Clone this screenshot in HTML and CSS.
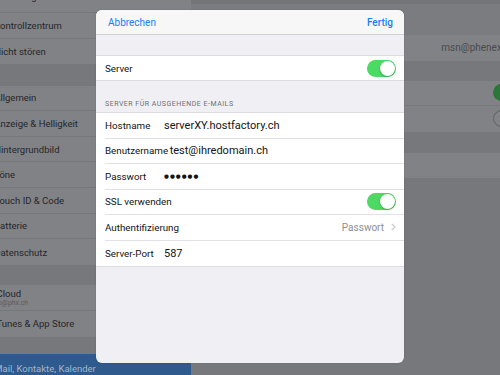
FILE: index.html
```html
<!DOCTYPE html>
<html>
<head>
<meta charset="utf-8">
<link rel="stylesheet" href="styles.css">
</head>
<body>
<div class="screen">
  <aside class="sidebar">
    <div class="cell cut">Mitteilungen</div>
    <div class="cell">Kontrollzentrum</div>
    <div class="cell last">Nicht stören</div>
    <div class="gap gap-a"></div>
    <div class="cell">Allgemein</div>
    <div class="cell">Anzeige &amp; Helligkeit</div>
    <div class="cell">Hintergrundbild</div>
    <div class="cell">Töne</div>
    <div class="cell">Touch ID &amp; Code</div>
    <div class="cell">Batterie</div>
    <div class="cell last">Datenschutz</div>
    <div class="gap gap-b"></div>
    <div class="cell two"><span>iCloud</span><span class="sub">info@phx.ch</span></div>
    <div class="cell last">iTunes &amp; App Store</div>
    <div class="gap gap-c"></div>
    <div class="cell selected">Mail, Kontakte, Kalender</div>
  </aside>
  <main class="detail">
    <div class="dtop"></div>
    <div class="drow"><span class="dval">msn@phenex.ch</span></div>
    <div class="dgap"></div>
    <div class="drow sep"><span class="dtoggle on"><span class="dknob"></span></span></div>
    <div class="drow"><span class="dtoggle off"><span class="dknob"></span></span></div>
    <div class="dgap2"></div>
    <div class="drow"></div>
  </main>
</div>

<div class="modal">
  <header class="mhead">
    <span class="mbtn">Abbrechen</span>
    <span class="mbtn strong">Fertig</span>
  </header>
  <div class="mspace"></div>
  <div class="group">
    <div class="row server">
      <span class="lbl">Server</span>
      <span class="toggle"><span class="knob"></span></span>
    </div>
  </div>
  <div class="shead">SERVER FÜR AUSGEHENDE E-MAILS</div>
  <div class="group">
    <div class="row"><span class="lbl">Hostname</span><span class="val">serverXY.hostfactory.ch</span></div>
    <div class="row"><span class="lbl">Benutzername</span><span class="val">test@ihredomain.ch</span></div>
    <div class="row"><span class="lbl">Passwort</span><span class="dots">●●●●●●</span></div>
    <div class="row"><span class="lbl">SSL verwenden</span><span class="toggle"><span class="knob"></span></span></div>
    <div class="row"><span class="lbl">Authentifizierung</span><span class="detailval">Passwort<svg class="chev" width="5" height="8" viewBox="0 0 5 8"><path d="M0.8 0.8 L4 4 L0.8 7.2" fill="none" stroke="#c4c4c9" stroke-width="1.1"/></svg></span></div>
    <div class="row"><span class="lbl">Server-Port</span><span class="val">587</span></div>
  </div>
</div>
</body>
</html>
```
FILE: styles.css
```css
* { box-sizing: border-box; }

body {
  margin: 0;
  width: 500px;
  height: 375px;
  overflow: hidden;
  position: relative;
  background: #77787b;
  font-family: Roboto, "Noto Sans", sans-serif;
}

.screen {
  display: flex;
  height: 375px;
  overflow: hidden;
}

/* ---------- dimmed sidebar ---------- */
.sidebar {
  flex: none;
  width: 197px;
  margin-left: -5.8px;
  margin-top: -12.6px;
  display: flex;
  flex-direction: column;
  background: #77787b;
}

.cell {
  height: 25.6px;
  flex: none;
  display: flex;
  align-items: center;
  background: #818286;
  border-bottom: 1px solid #76777b;
  font-size: 9.5px;
  color: #262628;
  white-space: nowrap;
}

.cell.cut { padding-bottom: 6px; }

.cell.last { border-bottom: none; }

.cell.two {
  flex-direction: column;
  align-items: flex-start;
  justify-content: center;
  line-height: 10px;
}

.sub {
  font-size: 6.8px;
  line-height: 8px;
  color: #595a5d;
  margin-left: -4px;
}

.gap { flex: none; }
.gap-a { height: 21.5px; }
.gap-b { height: 20.5px; }
.gap-c { height: 17.5px; }

.cell.selected {
  height: 40px;
  background: #2e5a8d;
  color: #a5b4c9;
  border: none;
  align-items: flex-start;
  padding-top: 9px;
}

/* ---------- dimmed detail ---------- */
.detail {
  flex: 1;
  display: flex;
  flex-direction: column;
  overflow: hidden;
  background: #77787b;
}

.dtop {
  height: 35px;
  flex: none;
  background: #7b7c80;
  border-top: 4px solid #747579;
}

.drow {
  height: 25.5px;
  flex: none;
  display: flex;
  align-items: center;
  background: #818286;
  padding-left: 302px;
}

.drow.sep { border-bottom: 1px solid #77787b; }

.dval {
  margin-left: -52px;
  font-size: 10px;
  color: #4a4b4e;
  white-space: nowrap;
}

.dgap { height: 20px; flex: none; }
.dgap2 { height: 21px; flex: none; }

.dtoggle {
  flex: none;
  width: 29px;
  height: 17px;
  border-radius: 9px;
  display: flex;
  align-items: center;
  padding: 1px;
}

.dtoggle.on { background: #297838; justify-content: flex-end; }
.dtoggle.off { background: #808185; border: 1px solid #6a6b6e; justify-content: flex-start; padding: 0; }

.dknob {
  width: 15px;
  height: 15px;
  border-radius: 50%;
  background: #828387;
  box-shadow: 0 0 1px rgba(0,0,0,0.4);
}

/* ---------- modal ---------- */
.modal {
  position: absolute;
  left: 96px;
  top: 10px;
  width: 308px;
  height: 353px;
  border-radius: 6px;
  overflow: hidden;
  background: #efeff4;
  display: flex;
  flex-direction: column;
  box-shadow: 0 0 2px rgba(0,0,0,0.12);
}

.mhead {
  height: 25px;
  flex: none;
  display: flex;
  align-items: center;
  justify-content: space-between;
  padding: 0 11px 0 12px;
  background: #f7f7f8;
  border-bottom: 1px solid #d0d0d5;
}

.mbtn {
  font-size: 10px;
  color: #1a7df6;
}

.mbtn.strong { font-weight: 500; }

.mspace { height: 20px; flex: none; }

.group {
  flex: none;
  background: #ffffff;
  border-top: 1px solid #dcdce0;
  border-bottom: 1px solid #dcdce0;
}

.row {
  height: 25.5px;
  margin-left: 9px;
  padding-right: 8px;
  display: flex;
  align-items: center;
  border-bottom: 1px solid #e2e2e6;
}

.row:last-child { border-bottom: none; }

.row.server {
  height: 24px;
  justify-content: space-between;
}

.lbl {
  min-width: 57.5px;
  margin-right: 1.5px;
  font-size: 9.8px;
  color: #141414;
  white-space: nowrap;
}

.val {
  font-size: 11px;
  color: #141414;
  white-space: nowrap;
}

.dots {
  font-family: "DejaVu Sans", sans-serif;
  font-size: 5.6px;
  letter-spacing: 1px;
  color: #141414;
}

.toggle {
  margin-left: auto;
  flex: none;
  width: 29px;
  height: 17px;
  border-radius: 9px;
  background: #4cd964;
  display: flex;
  align-items: center;
  justify-content: flex-end;
  padding: 1px;
}

.knob {
  width: 15px;
  height: 15px;
  border-radius: 50%;
  background: #ffffff;
  box-shadow: 0 1px 2px rgba(0,0,0,0.25), 0 0 0 0.5px rgba(0,0,0,0.06);
}

.detailval {
  margin-left: auto;
  display: flex;
  align-items: center;
  gap: 7px;
  font-size: 10px;
  color: #8e8e93;
}

.chev { display: block; }

.shead {
  height: 31px;
  flex: none;
  display: flex;
  align-items: flex-end;
  padding: 0 0 4px 9px;
  font-size: 7px;
  letter-spacing: 0.5px;
  color: #707075;
}
```
